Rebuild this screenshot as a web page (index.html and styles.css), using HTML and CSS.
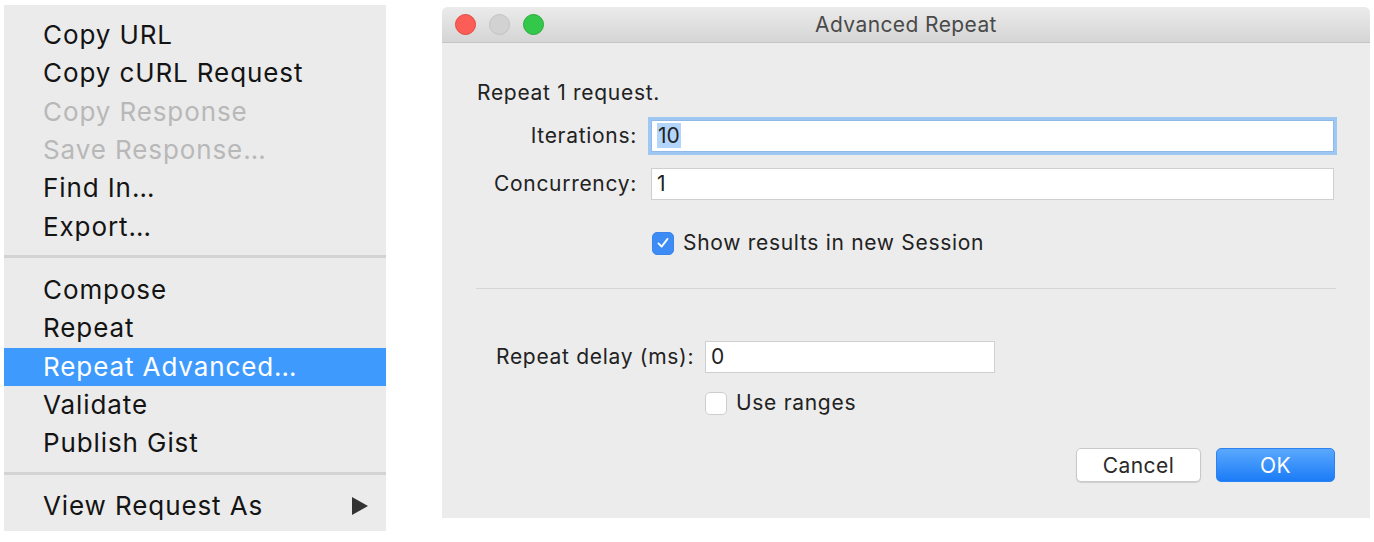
FILE: index.html
```html
<!DOCTYPE html>
<html>
<head>
<meta charset="utf-8">
<link rel="stylesheet" href="styles.css">
</head>
<body>
<div class="page">
  <div class="menu">
    <div class="item">Copy URL</div>
    <div class="item">Copy cURL Request</div>
    <div class="item disabled">Copy Response</div>
    <div class="item disabled">Save Response…</div>
    <div class="item">Find In…</div>
    <div class="item">Export…</div>
    <div class="sep"></div>
    <div class="item">Compose</div>
    <div class="item">Repeat</div>
    <div class="item active">Repeat Advanced…</div>
    <div class="item">Validate</div>
    <div class="item">Publish Gist</div>
    <div class="sep"></div>
    <div class="item sub">View Request As
      <svg class="arrow" width="16" height="18" viewBox="0 0 16 18"><polygon points="0,0 16,9 0,18" fill="#333"/></svg>
    </div>
  </div>

  <div class="dialog">
    <div class="titlebar">
      <div class="lights">
        <span class="light red"></span>
        <span class="light gray"></span>
        <span class="light green"></span>
      </div>
      <div class="title">Advanced Repeat</div>
    </div>
    <div class="body">
      <div class="intro">Repeat 1 request.</div>
      <div class="form">
        <label class="lbl">Iterations:</label>
        <div class="field focus"><span class="sel">10</span></div>
        <label class="lbl">Concurrency:</label>
        <div class="field">1</div>
      </div>
      <div class="check-row first">
        <span class="box checked">
          <svg width="22" height="22" viewBox="0 0 22 22"><path d="M6 11.5 L9.5 15 L16 6.5" fill="none" stroke="#fff" stroke-width="2" stroke-linecap="round" stroke-linejoin="round"/></svg>
        </span>
        <span class="ctext">Show results in new Session</span>
      </div>
      <div class="divider"></div>
      <div class="delay-row">
        <label class="lbl2">Repeat delay (ms):</label>
        <div class="field small">0</div>
      </div>
      <div class="check-row second">
        <span class="box"></span>
        <span class="ctext">Use ranges</span>
      </div>
      <div class="buttons">
        <button class="btn cancel">Cancel</button>
        <button class="btn ok">OK</button>
      </div>
    </div>
  </div>
</div>
</body>
</html>
```

FILE: styles.css
```css
* { box-sizing: border-box; }
html, body { margin: 0; padding: 0; background: #ffffff; }
body { font-family: Inter, "Liberation Sans", sans-serif; color: #1e1e1e; }

.page {
  display: flex;
  align-items: flex-start;
  width: 1374px;
  height: 542px;
}

/* ---------- menu ---------- */
.menu {
  margin: 5px 0 0 4px;
  width: 382px;
  height: 526px;
  background: #ebebeb;
  padding-top: 10.8px;
  display: flex;
  flex-direction: column;
}
.item {
  height: 38.4px;
  line-height: 38.4px;
  padding-left: 39px;
  font-size: 26px;
  letter-spacing: 0.9px;
  color: #141414;
  white-space: nowrap;
  position: relative;
}
.item.disabled { color: #b8b8b8; }
.item.active { background: #3e9bfd; color: #ffffff; }
.item.sub { display: flex; align-items: center; justify-content: space-between; padding-right: 18px; }
.sep {
  height: 24.6px;
  padding-top: 9px;
}
.sep::before {
  content: "";
  display: block;
  height: 3px;
  background: #d3d3d3;
}

/* ---------- dialog ---------- */
.dialog {
  margin: 7px 0 0 56px;
  width: 928px;
  height: 511px;
  background: #ececec;
  border-radius: 6px 6px 0 0;
  display: flex;
  flex-direction: column;
}
.titlebar {
  height: 36px;
  flex: none;
  background: linear-gradient(#ebebeb, #d5d5d5);
  border-bottom: 1px solid #c4c4c4;
  border-radius: 6px 6px 0 0;
  display: flex;
  align-items: center;
  position: relative;
}
.lights { display: flex; gap: 13px; padding-left: 13px; }
.light { width: 21px; height: 21px; border-radius: 50%; display: block; }
.red { background: #fc5e57; border: 1px solid #e2463f; }
.gray { background: #d2d2d2; border: 1px solid #c2c2c2; }
.green { background: #34c84a; border: 1px solid #25aa37; }
.title {
  position: absolute;
  left: 0; right: 0; top: 0; bottom: 0;
  text-align: center;
  line-height: 36px;
  font-size: 21px;
  letter-spacing: 0.4px;
  color: #4a4a4a;
  pointer-events: none;
}

.body {
  padding: 38px 34px 0 35px;
  display: flex;
  flex-direction: column;
  font-size: 21px;
  letter-spacing: 0.7px;
  color: #222;
}
.intro { height: 24px; line-height: 24px; }

.form {
  margin-top: 15px;
  display: grid;
  grid-template-columns: 174px 683px;
  row-gap: 16px;
  align-items: center;
}
.lbl { text-align: right; padding-right: 14px; line-height: 32px; }
.field {
  height: 32px;
  background: #ffffff;
  border: 1px solid #cfcfcf;
  padding-left: 5px;
  line-height: 30px;
  font-size: 21px;
  letter-spacing: 0;
}
.field.focus {
  box-shadow: 0 0 0 3px #9ec7f1;
  border-color: #8fb9e8;
}
.sel { background: #b3d4fb; padding: 0 1px; }

.check-row { display: flex; align-items: center; }
.check-row.first { margin: 31px 0 0 175px; }
.check-row.second { margin: 18px 0 0 228px; }
.box {
  width: 22px;
  height: 23px;
  border-radius: 5px;
  background: #ffffff;
  border: 1px solid #cdcdcd;
  display: flex;
  align-items: center;
  justify-content: center;
}
.box.checked { background: #3d8bf5; border-color: #3a84ec; }
.ctext { margin-left: 9px; line-height: 24px; }

.divider {
  margin-top: 33px;
  margin-left: -1px;
  height: 1px;
  width: 860px;
  background: #d6d6d6;
}

.delay-row {
  margin-top: 52px;
  display: flex;
  align-items: center;
  padding-left: 19px;
}
.lbl2 { width: 209px; line-height: 32px; }
.field.small { width: 290px; }

.buttons {
  margin-top: 33px;
  display: flex;
  justify-content: flex-end;
  gap: 15px;
  padding-right: 1px;
}
.btn {
  height: 34px;
  border-radius: 5px;
  font-family: Inter, "Liberation Sans", sans-serif;
  font-size: 21px;
  letter-spacing: 0.4px;
  padding: 0;
}
.cancel {
  width: 125px;
  background: #ffffff;
  border: 1px solid #c9c9c9;
  color: #2a2a2a;
  box-shadow: 0 1px 1px rgba(0,0,0,0.12);
}
.ok {
  width: 119px;
  background: linear-gradient(#5aa8fd, #1b7cf7);
  border: 1px solid #2b82f2;
  color: #ffffff;
}
```
